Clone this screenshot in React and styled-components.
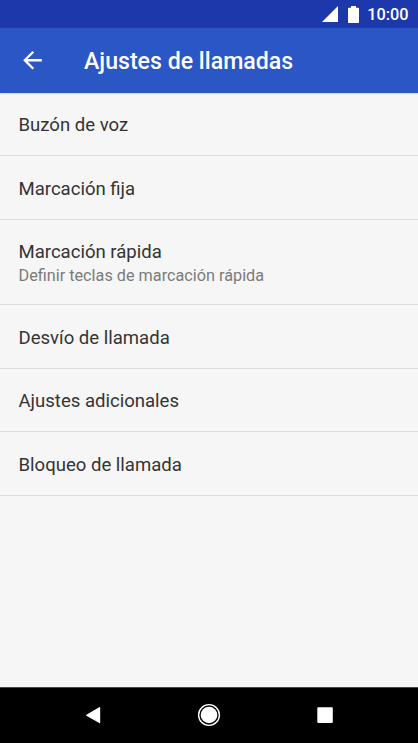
import styled, { createGlobalStyle } from "styled-components";

const settings = [
  { key: "voicemail", title: "Buzón de voz" },
  { key: "fixed", title: "Marcación fija" },
  {
    key: "speed",
    title: "Marcación rápida",
    summary: "Definir teclas de marcación rápida",
  },
  { key: "forwarding", title: "Desvío de llamada" },
  { key: "additional", title: "Ajustes adicionales" },
  { key: "barring", title: "Bloqueo de llamada" },
];

function StatusBar() {
  return (
    <StStatusBar>
      <StSignal viewBox="0 0 16 16">
        <path d="M16 0v16H0z" />
      </StSignal>
      <StBattery viewBox="0 0 11 17">
        <path d="M3 0h5v1.7h2.2q.8 0 .8.8v13.7q0 .8-.8.8H.8q-.8 0-.8-.8V2.5q0-.8.8-.8H3z" />
      </StBattery>
      <StTime>10:00</StTime>
    </StStatusBar>
  );
}

function AppBar() {
  return (
    <StAppBar>
      <StBackButton aria-label="Atrás">
        <svg viewBox="-0.43 -0.2 24 24">
          <path d="M20 11H7.83l5.59-5.59L12 4l-8 8 8 8 1.41-1.41L7.83 13H20v-2z" />
        </svg>
      </StBackButton>
      <StTitle>Ajustes de llamadas</StTitle>
    </StAppBar>
  );
}

function NavBar() {
  return (
    <StNavBar>
      <StNavButton>
        <svg width="24" height="24" viewBox="0 0 24 24">
          <path d="M18.2 4.2q1-.5 1 .5v14.9q0 1-1 .5L5.4 12.7q-.8-.5 0-1z" />
        </svg>
      </StNavButton>
      <StNavButton>
        <svg width="24" height="24" viewBox="0 0 24 24">
          <circle cx="12" cy="12" r="10.4" fill="none" stroke="#fff" strokeWidth="1.4" />
          <circle cx="12" cy="12" r="8.3" />
        </svg>
      </StNavButton>
      <StNavButton>
        <svg width="24" height="24" viewBox="0 0 24 24">
          <rect x="4.3" y="4.2" width="15.5" height="15.7" rx="0.8" />
        </svg>
      </StNavButton>
    </StNavBar>
  );
}

function App() {
  return (
    <StScreen>
      <GlobalStyle />
      <StatusBar />
      <AppBar />
      <StList>
        {settings.map(({ key, title, summary }) => (
          <StItem key={key} $tall={Boolean(summary)}>
            <StItemTitle>{title}</StItemTitle>
            {summary && <StSummary>{summary}</StSummary>}
          </StItem>
        ))}
      </StList>
      <NavBar />
    </StScreen>
  );
}

export default App;

// styled-components
const GlobalStyle = createGlobalStyle`
  * {
    box-sizing: border-box;
  }

  body {
    margin: 0;
    font-family: Roboto, "Noto Sans", sans-serif;
  }
`;

const StScreen = styled.div`
  display: flex;
  flex-direction: column;
  width: 100%;
  height: 100vh;
  overflow: hidden;
  background-color: #f6f6f6;
`;

const StStatusBar = styled.div`
  display: flex;
  align-items: center;
  justify-content: flex-end;
  flex: 0 0 28px;
  padding-right: 9.5px;
  color: #fff;
  background-color: #1c38ab;
`;

const StSignal = styled.svg`
  width: 16px;
  height: 16px;
  margin-right: 10px;
  fill: #fff;
`;

const StBattery = styled.svg`
  width: 11px;
  height: 17px;
  margin-right: 8.3px;
  fill: #fff;
`;

const StTime = styled.span`
  margin-top: 2px;
  font-size: 16.26px;
  font-weight: 500;
  line-height: 20px;
`;

const StAppBar = styled.header`
  display: flex;
  align-items: center;
  flex: 0 0 64.6px;
  z-index: 1;
  padding-left: 18.4px;
  color: #fff;
  background-color: #2a56c6;
  box-shadow: 0 0 2px rgba(42, 86, 198, 0.5);
`;

const StBackButton = styled.button`
  display: flex;
  width: 28px;
  height: 28px;
  margin-right: 37.6px;
  padding: 0;
  border: none;
  background: none;
  fill: #fff;
`;

const StTitle = styled.h1`
  margin: 3.4px 0 0;
  font-size: 23.15px;
  font-weight: 500;
  line-height: 28px;
`;

const StList = styled.ul`
  flex: 1;
  margin: 0;
  padding: 0;
  list-style: none;
`;

const StItem = styled.li`
  display: flex;
  flex-direction: column;
  justify-content: center;
  height: ${(props) => (props.$tall ? "85.5px" : "63.5px")};
  padding: ${(props) => (props.$tall ? "4px" : "2.6px")} 0 0 18.5px;
  border-bottom: 1px solid #dadada;
`;

const StItemTitle = styled.span`
  color: #343434;
  font-size: 18.56px;
  line-height: 24px;
`;

const StSummary = styled.span`
  margin-top: 1px;
  color: #7b7b7b;
  font-size: 16.24px;
  line-height: 22px;
`;

const StNavBar = styled.nav`
  display: flex;
  justify-content: center;
  flex: 0 0 56px;
  padding-bottom: 1px;
  border-top: 1px solid #484848;
  background-color: #000;
`;

const StNavButton = styled.div`
  display: flex;
  align-items: center;
  justify-content: center;
  width: 116px;
  fill: #fff;
`;
